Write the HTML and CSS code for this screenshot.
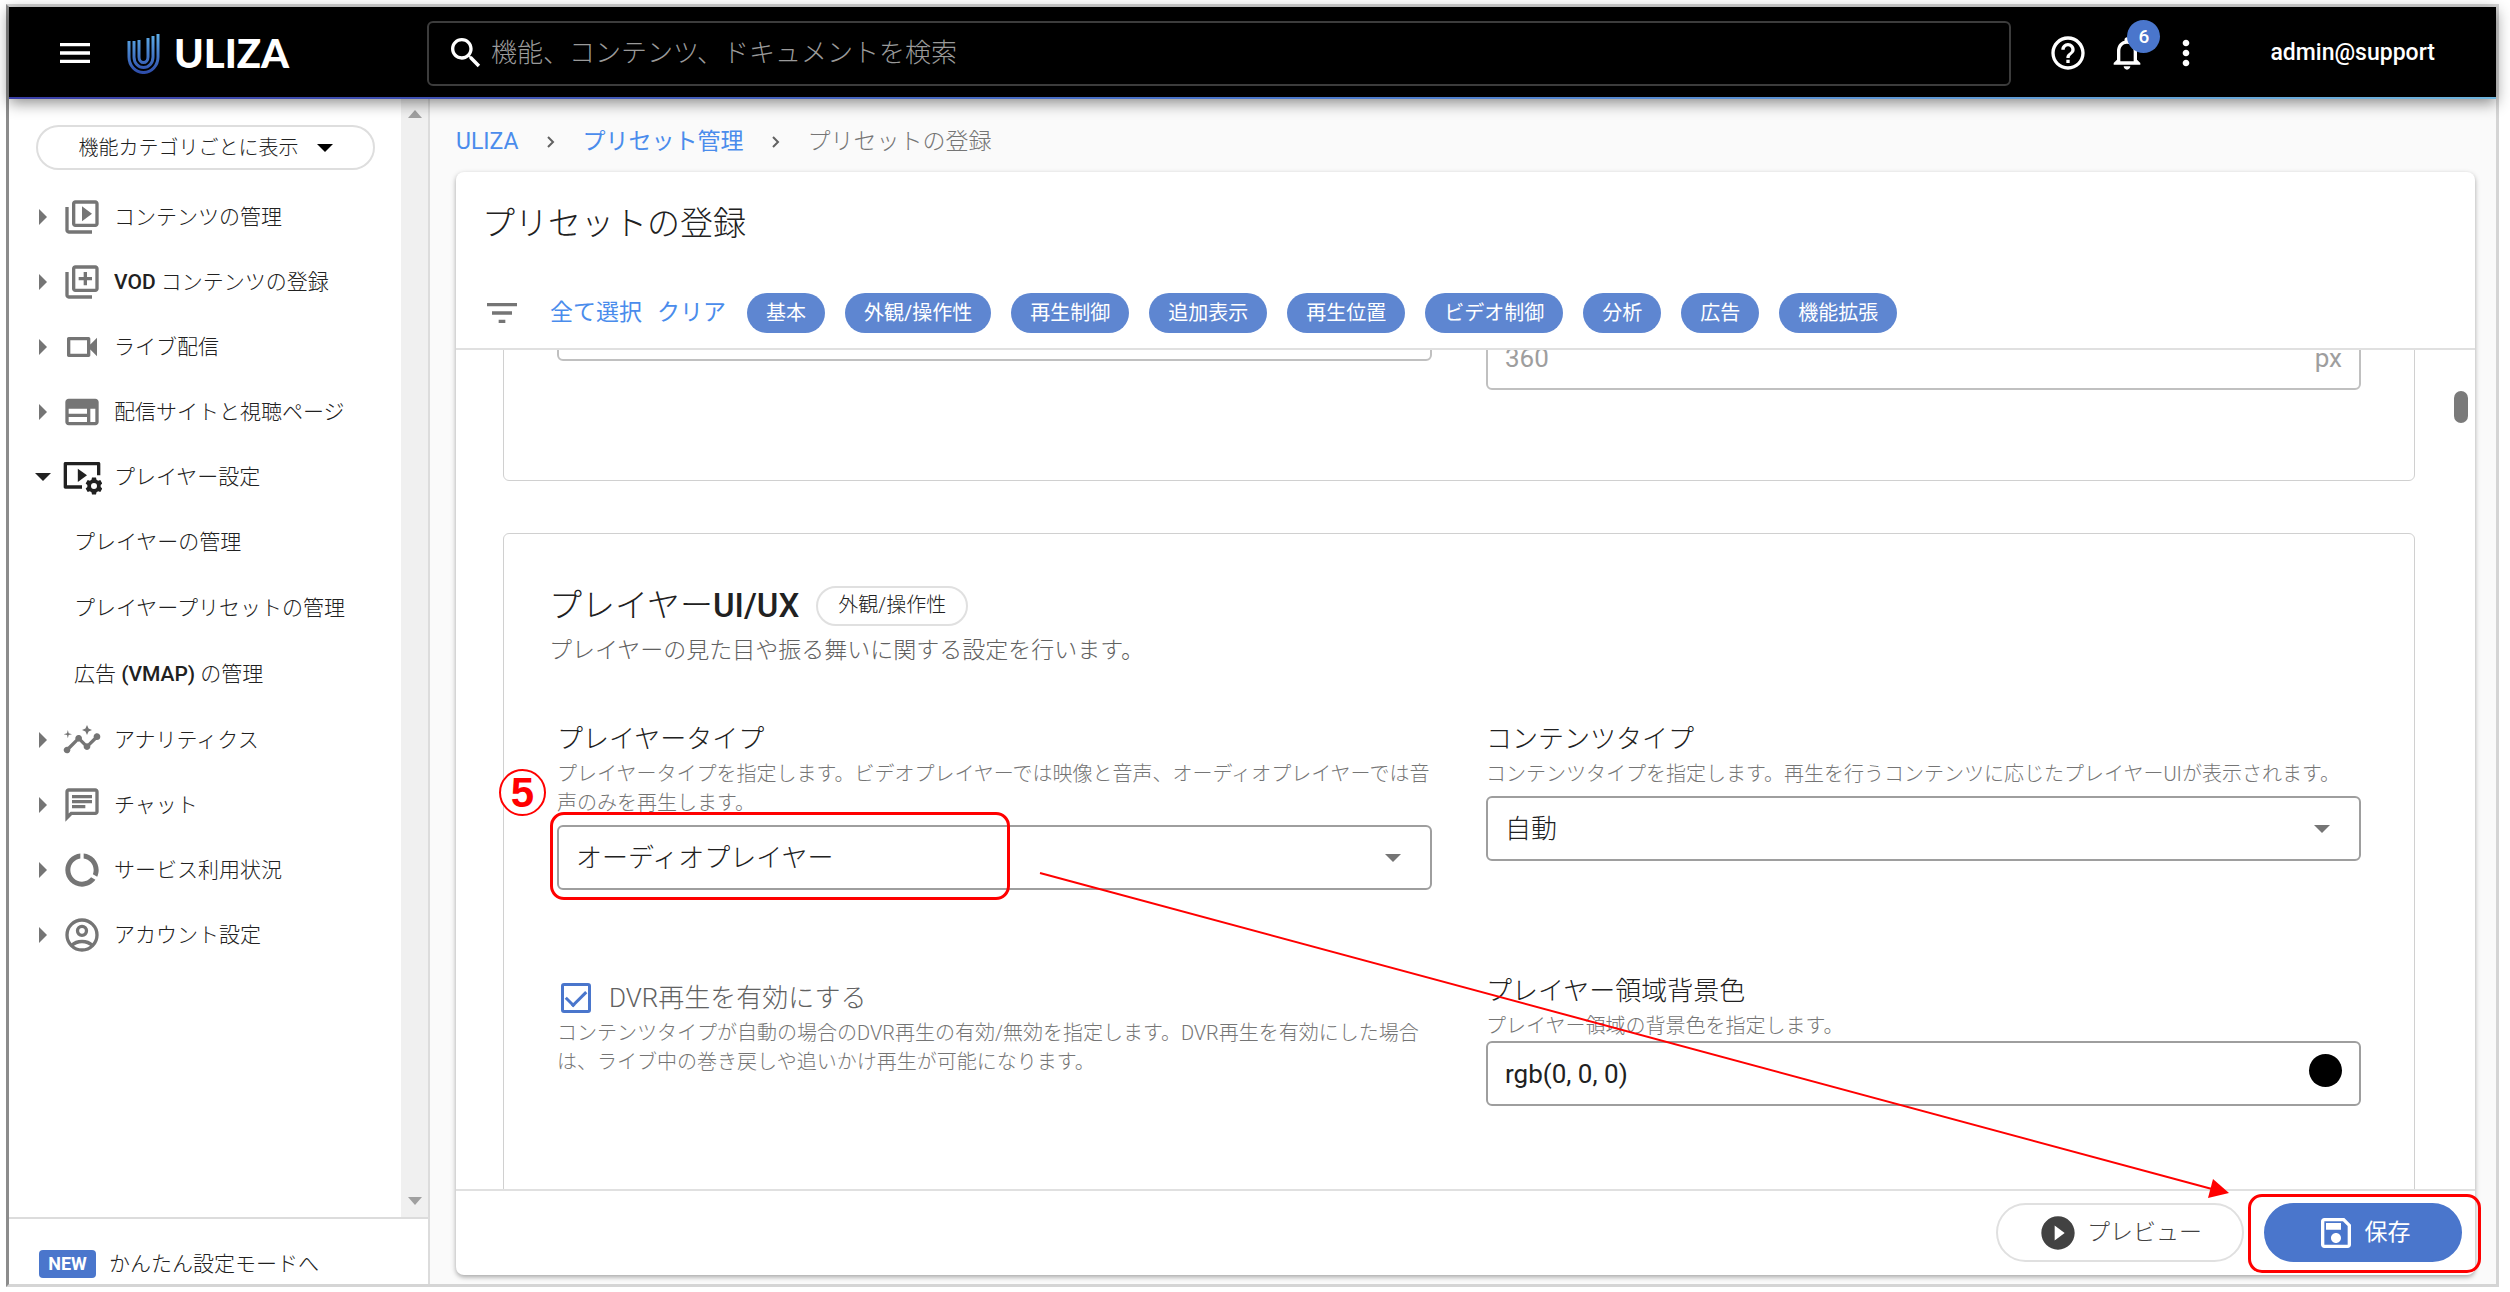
FILE: index.html
```html
<!DOCTYPE html>
<html lang="ja">
<head>
    <meta charset="UTF-8">
    <meta name="viewport" content="width=device-width, initial-scale=1.0">
    <title>プリセットの登録 - ULIZA</title>
    <link rel="stylesheet" href="styles.css">
</head>
<body>

<div class="window">
    <header class="topbar">
        <div class="brand">
            <button class="icon-btn" aria-label="メニュー">
                <svg class="icon" viewBox="0 0 24 24"><path d="M3 18h18v-2H3v2zm0-5h18v-2H3v2zm0-7v2h18V6H3z"/></svg>
            </button>
            <a class="logo" href="#">
                <svg class="logo-mark" viewBox="0 0 33 41">
                    <defs>
                        <linearGradient id="mark" x1="0" y1="0" x2="0" y2="41" gradientUnits="userSpaceOnUse">
                            <stop offset="0" stop-color="#5fb0ea"/>
                            <stop offset="1" stop-color="#2c4aa8"/>
                        </linearGradient>
                    </defs>
                    <g fill="none" stroke="url(#mark)" stroke-width="3">
                        <path d="M2 8v16a14 15 0 0 0 29 0V1"/>
                        <path d="M7 8v16a9 10 0 0 0 19 0V3"/>
                        <path d="M12 7v17a4 5 0 0 0 9 0V5"/>
                    </g>
                </svg>
                <span class="logo-text">ULIZA</span>
            </a>
        </div>
        <label class="search">
            <svg class="icon" viewBox="0 0 24 24"><path d="M15.5 14h-.79l-.28-.27C15.41 12.59 16 11.11 16 9.5 16 5.91 13.09 3 9.5 3S3 5.91 3 9.5 5.91 16 9.5 16c1.61 0 3.09-.59 4.23-1.57l.27.28v.79l5 4.99L20.49 19l-4.99-5zm-6 0C7.01 14 5 11.99 5 9.5S7.01 5 9.5 5 14 7.01 14 9.5 11.99 14 9.5 14z"/></svg>
            <input type="search" placeholder="機能、コンテンツ、ドキュメントを検索" aria-label="検索">
        </label>
        <div class="top-actions">
            <button class="icon-btn" aria-label="ヘルプ">
                <svg class="icon" viewBox="0 0 24 24"><path d="M11 18h2v-2h-2v2zm1-16C6.48 2 2 6.48 2 12s4.48 10 10 10 10-4.48 10-10S17.52 2 12 2zm0 18c-4.41 0-8-3.59-8-8s3.59-8 8-8 8 3.59 8 8-3.59 8-8 8zm0-14c-2.21 0-4 1.79-4 4h2c0-1.1.9-2 2-2s2 .9 2 2c0 2-3 1.75-3 5h2c0-2.25 3-2.5 3-5 0-2.21-1.79-4-4-4z"/></svg>
            </button>
            <button class="icon-btn" aria-label="お知らせ">
                <svg class="icon" viewBox="0 0 24 24"><path d="M12 22c1.1 0 2-.9 2-2h-4c0 1.1.9 2 2 2zm6-6v-5c0-3.07-1.63-5.64-4.5-6.32V4c0-.83-.67-1.5-1.5-1.5s-1.5.67-1.5 1.5v.68C7.64 5.36 6 7.92 6 11v5l-2 2v1h16v-1l-2-2zm-2 1H8v-6c0-2.48 1.51-4.5 4-4.5s4 2.02 4 4.5v6z"/></svg>
                <span class="badge">6</span>
            </button>
            <button class="icon-btn" aria-label="その他">
                <svg class="icon" viewBox="0 0 24 24"><path d="M12 8c1.1 0 2-.9 2-2s-.9-2-2-2-2 .9-2 2 .9 2 2 2zm0 2c-1.1 0-2 .9-2 2s.9 2 2 2 2-.9 2-2-.9-2-2-2zm0 6c-1.1 0-2 .9-2 2s.9 2 2 2 2-.9 2-2-.9-2-2-2z"/></svg>
            </button>
            <span class="user">admin@support</span>
        </div>
    </header>

    <div class="layout">
        <aside class="sidebar">
            <div class="side-scroll">
                <nav class="side-nav">
                    <button class="view-switch">機能カテゴリごとに表示
                        <svg class="down" viewBox="0 0 16 8"><path d="M0 0h16l-8 8z"/></svg>
                    </button>
                    <ul class="menu">
                        <li><a href="#"><svg class="caret" viewBox="0 0 16 16"><path d="M4 0l8 8-8 8z"/></svg>
                            <svg class="icon" viewBox="0 0 24 24"><path d="M4 6H2v14c0 1.1.9 2 2 2h14v-2H4V6zm16-4H8c-1.1 0-2 .9-2 2v12c0 1.1.9 2 2 2h12c1.1 0 2-.9 2-2V4c0-1.1-.9-2-2-2zm0 14H8V4h12v12zM12 5.500v9l6-4.500z"/></svg>コンテンツの管理</a></li>
                        <li><a href="#"><svg class="caret" viewBox="0 0 16 16"><path d="M4 0l8 8-8 8z"/></svg>
                            <svg class="icon" viewBox="0 0 24 24"><path d="M4 6H2v14c0 1.1.9 2 2 2h14v-2H4V6zm16-4H8c-1.1 0-2 .9-2 2v12c0 1.1.9 2 2 2h12c1.1 0 2-.9 2-2V4c0-1.1-.9-2-2-2zm0 14H8V4h12v12zM13 14h2v-3h3V9h-3V6h-2v3h-3v2h3z"/></svg><span><b>VOD</b> コンテンツの登録</span></a></li>
                        <li><a href="#"><svg class="caret" viewBox="0 0 16 16"><path d="M4 0l8 8-8 8z"/></svg>
                            <svg class="icon" viewBox="0 0 24 24"><path d="M15 8v8H5V8h10m1-2H4c-.55 0-1 .45-1 1v10c0 .55.45 1 1 1h12c.55 0 1-.45 1-1v-3.500l4 4v-11l-4 4V7c0-.55-.45-1-1-1z"/></svg>ライブ配信</a></li>
                        <li><a href="#"><svg class="caret" viewBox="0 0 16 16"><path d="M4 0l8 8-8 8z"/></svg>
                            <svg class="icon" viewBox="0 0 24 24"><path d="M20 4H4c-1.1 0-2 .9-2 2v12c0 1.1.9 2 2 2h16c1.1 0 2-.9 2-2V6c0-1.1-.9-2-2-2zm-5 14H4v-3h11v3zm0-5H4V10h11v3zm5 5h-3V10h3v8z"/></svg>配信サイトと視聴ページ</a></li>
                        <li class="open"><a href="#"><svg class="caret" viewBox="0 0 16 16"><path d="M0 4h16l-8 8z"/></svg>
                            <svg class="icon" viewBox="0 0 24 24"><path d="M2 3h20c.6 0 1 .4 1 1v7h-2V5H3v12h9v2H2c-.6 0-1-.4-1-1V4c0-.6.400-1 1-1z"/><path d="M9.500 7v8l5.500-4z"/><path fill-rule="evenodd" d="M18 12.300h2.400l.3 1.300 1 .6 1.300-.4 1.200 2.100-1 .9v1.200l1 .9-1.200 2.100-1.300-.4-1 .6-.3 1.300H18l-.3-1.300-1-.6-1.300.4-1.200-2.100 1-.9v-1.200l-1-.9 1.200-2.100 1.300.4 1-.6zM19.200 15.600a1.800 1.800 0 1 0 0 3.600 1.800 1.800 0 0 0 0-3.600z"/></svg>プレイヤー設定</a>
                            <ul class="submenu">
                                <li><a href="#">プレイヤーの管理</a></li>
                                <li><a href="#">プレイヤープリセットの管理</a></li>
                                <li><a href="#"><span>広告 <b>(VMAP)</b> の管理</span></a></li>
                            </ul>
                        </li>
                        <li><a href="#"><svg class="caret" viewBox="0 0 16 16"><path d="M4 0l8 8-8 8z"/></svg>
                            <svg class="icon" viewBox="0 0 24 24"><path d="M21 8c-1.450 0-2.260 1.440-1.930 2.510l-3.550 3.560c-.3-.09-.74-.09-1.040 0l-2.550-2.550C12.270 10.450 11.460 9 10 9c-1.450 0-2.270 1.440-1.930 2.520l-4.560 4.550C2.440 15.740 1 16.550 1 18c0 1.100.9 2 2 2 1.450 0 2.260-1.440 1.930-2.510l4.550-4.560c.3.09.74.09 1.040 0l2.550 2.550C12.730 16.550 13.540 18 15 18c1.450 0 2.270-1.440 1.930-2.520l3.560-3.550C21.560 12.260 23 11.450 23 10c0-1.100-.9-2-2-2zM15 9l.94-2.070L18 6l-2.060-.93L15 3l-.92 2.070L12 6l2.080.93zM3.500 11L4 9l2-.5L4 8l-.5-2L3 8l-2 .5L3 9z"/></svg>アナリティクス</a></li>
                        <li><a href="#"><svg class="caret" viewBox="0 0 16 16"><path d="M4 0l8 8-8 8z"/></svg>
                            <svg class="icon" viewBox="0 0 24 24"><path d="M4 4h16v12H5.170L4 17.170V4m0-2c-1.100 0-1.990.9-1.990 2L2 22l4-4h14c1.100 0 2-.9 2-2V4c0-1.100-.9-2-2-2H4zm2 10h8v2H6v-2zm0-3h12v2H6V9zm0-3h12v2H6V6z"/></svg>チャット</a></li>
                        <li><a href="#"><svg class="caret" viewBox="0 0 16 16"><path d="M4 0l8 8-8 8z"/></svg>
                            <svg class="icon" viewBox="0 0 24 24"><path d="M13 2.050v3.030c3.390.49 6 3.390 6 6.920 0 .9-.18 1.750-.48 2.540l2.600 1.530c.56-1.240.88-2.620.88-4.070 0-5.180-3.950-9.450-9-9.950zM12 19c-3.870 0-7-3.130-7-7 0-3.530 2.610-6.430 6-6.920V2.050c-5.060.5-9 4.760-9 9.950 0 5.520 4.470 10 9.990 10 3.310 0 6.240-1.610 8.060-4.090l-2.600-1.530C16.170 17.980 14.210 19 12 19z"/></svg>サービス利用状況</a></li>
                        <li><a href="#"><svg class="caret" viewBox="0 0 16 16"><path d="M4 0l8 8-8 8z"/></svg>
                            <svg class="icon line" viewBox="0 0 24 24"><circle cx="12" cy="12" r="9"/><circle cx="12" cy="9.500" r="2.700"/><path d="M5.800 18.300c1.500-1.500 3.700-2.400 6.200-2.400s4.700.9 6.200 2.400"/></svg>アカウント設定</a></li>
                    </ul>
                </nav>
                <div class="side-bar-track">
                    <svg viewBox="0 0 14 8"><path d="M0 8h14L7 0z"/></svg>
                    <svg viewBox="0 0 14 8"><path d="M0 0h14L7 8z"/></svg>
                </div>
            </div>
            <a class="easy-mode" href="#"><span class="new">NEW</span>かんたん設定モードへ</a>
        </aside>

        <main class="main">
            <nav class="crumbs">
                <a href="#">ULIZA</a>
                <svg viewBox="0 0 8 12"><path d="M1 1l5 5-5 5"/></svg>
                <a href="#">プリセット管理</a>
                <svg viewBox="0 0 8 12"><path d="M1 1l5 5-5 5"/></svg>
                <span>プリセットの登録</span>
            </nav>

            <div class="card">
                <div class="card-head">
                    <h1>プリセットの登録</h1>
                    <div class="filters">
                        <svg class="icon" viewBox="0 0 24 24"><path d="M10 18h4v-2h-4v2zM3 6v2h18V6H3zm3 7h12v-2H6v2z"/></svg>
                        <div class="filter-links">
                            <a href="#">全て選択</a>
                            <a href="#">クリア</a>
                        </div>
                        <div class="chips">
                            <button class="chip">基本</button>
                            <button class="chip">外観/操作性</button>
                            <button class="chip">再生制御</button>
                            <button class="chip">追加表示</button>
                            <button class="chip">再生位置</button>
                            <button class="chip">ビデオ制御</button>
                            <button class="chip">分析</button>
                            <button class="chip">広告</button>
                            <button class="chip">機能拡張</button>
                        </div>
                    </div>
                </div>

                <div class="card-scroll">
                    <section class="panel panel-size">
                        <div class="grid">
                            <div class="box muted"><input type="text" aria-label="幅"></div>
                            <div class="box muted lower"><input type="text" placeholder="360" aria-label="高さ"><span>px</span></div>
                        </div>
                    </section>

                    <section class="panel">
                        <div class="panel-title">
                            <h2>プレイヤー<b>UI/UX</b></h2>
                            <span class="tag">外観/操作性</span>
                        </div>
                        <p class="panel-text">プレイヤーの見た目や振る舞いに関する設定を行います。</p>
                        <div class="grid">
                            <div class="field">
                                <label for="player-type">プレイヤータイプ</label>
                                <p class="help">プレイヤータイプを指定します。ビデオプレイヤーでは映像と音声、オーディオプレイヤーでは音<br>声のみを再生します。</p>
                                <div class="box marked">
                                    <select id="player-type">
                                        <option>オーディオプレイヤー</option>
                                        <option>ビデオプレイヤー</option>
                                    </select>
                                    <svg class="down" viewBox="0 0 16 8"><path d="M0 0h16l-8 8z"/></svg>
                                </div>
                                <span class="step">5</span>
                            </div>
                            <div class="field">
                                <label for="content-type">コンテンツタイプ</label>
                                <p class="help">コンテンツタイプを指定します。再生を行うコンテンツに応じたプレイヤーUIが表示されます。</p>
                                <div class="box">
                                    <select id="content-type">
                                        <option>自動</option>
                                    </select>
                                    <svg class="down" viewBox="0 0 16 8"><path d="M0 0h16l-8 8z"/></svg>
                                </div>
                            </div>
                            <div class="field field-check">
                                <label class="check"><input type="checkbox" checked>DVR再生を有効にする</label>
                                <p class="help">コンテンツタイプが自動の場合のDVR再生の有効/無効を指定します。DVR再生を有効にした場合<br>は、ライブ中の巻き戻しや追いかけ再生が可能になります。</p>
                            </div>
                            <div class="field field-color">
                                <label for="bg-color">プレイヤー領域背景色</label>
                                <p class="help">プレイヤー領域の背景色を指定します。</p>
                                <div class="box">
                                    <input id="bg-color" type="text" value="rgb(0, 0, 0)">
                                    <button class="swatch" aria-label="色を選択"></button>
                                </div>
                            </div>
                        </div>
                    </section>
                    <div class="thumb"></div>
                </div>

                <div class="card-foot">
                    <button class="btn">
                        <svg class="icon" viewBox="0 0 24 24"><path d="M12 2C6.480 2 2 6.480 2 12s4.480 10 10 10 10-4.480 10-10S17.520 2 12 2zm-2 14.500v-9l6 4.500z"/></svg>プレビュー
                    </button>
                    <button class="btn btn-save">
                        <svg class="icon" viewBox="0 0 24 24"><path d="M17 3H5c-1.110 0-2 .9-2 2v14c0 1.100.890 2 2 2h14c1.100 0 2-.9 2-2V7l-4-4zm2 16H5V5h11.170L19 7.830V19zm-7-7c-1.660 0-3 1.340-3 3s1.340 3 3 3 3-1.340 3-3-1.340-3-3-3zM6 6h9v4H6z"/></svg>保存
                    </button>
                </div>
            </div>
        </main>
    </div>
</div>

<!-- arrow from the player type to the save button -->
<svg class="arrow">
    <path class="arrow-line" d="M1040 873L2212 1189"/>
    <path class="arrow-head" d="M2229 1193l-16-14-5 19z"/>
</svg>

</body>
</html>
```
FILE: styles.css
```css
* {
    box-sizing: border-box;
    margin: 0;
    padding: 0;
}

body {
    height: 100vh;
    padding: 4px 11px 5px 6px;
    background: #fff;
    color: #212121;
    font: 300 21px/30px Roboto, "Noto Sans CJK JP", sans-serif;
    overflow: hidden;
}

a {
    color: inherit;
    text-decoration: none;
}

b {
    font-weight: 500;
}

ul {
    list-style: none;
}

button,
input,
select {
    font: inherit;
    color: inherit;
    background: none;
    border: 0;
    outline: 0;
}

.icon {
    width: 40px;
    height: 40px;
    flex: none;
    fill: currentColor;
}

.icon.line {
    fill: none;
    stroke: currentColor;
    stroke-width: 2;
}

.window {
    height: 100%;
    display: flex;
    flex-direction: column;
    border: 3px solid #d5d5d5;
    border-left-color: #8c8c8c;
}

/* Top bar */
.topbar {
    height: 92px;
    flex: none;
    display: flex;
    align-items: center;
    padding-right: 61px;
    background: linear-gradient(90deg, #3a3fa8, #4a76cc 50%, #6fb4dc) bottom / 100% 2px no-repeat, #000;
    color: #fff;
    box-shadow: 0 4px 14px rgba(0, 0, 0, 0.45);
    position: relative;
    z-index: 2;
}

.brand {
    width: 418px;
    padding-left: 46px;
    display: flex;
    align-items: center;
    gap: 32px;
}

.logo {
    display: flex;
    align-items: center;
    gap: 14px;
}

.logo-mark {
    width: 33px;
    height: 41px;
}

.logo-text {
    font: 900 40px/40px Lato, sans-serif;
}

.icon-btn {
    display: flex;
    position: relative;
    cursor: pointer;
}

.search {
    flex: 1;
    height: 65px;
    display: flex;
    align-items: center;
    gap: 5px;
    padding-left: 17px;
    border: 2px solid #3c3c3c;
    border-radius: 6px;
}

.search input {
    flex: 1;
    font-size: 26px;
}

.search input::placeholder {
    color: #9a9a9a;
}

.top-actions {
    display: flex;
    align-items: center;
    gap: 19px;
    padding-left: 37px;
}

.badge {
    position: absolute;
    left: 20px;
    top: -13px;
    width: 33px;
    height: 33px;
    border-radius: 50%;
    background: #4a76cc;
    font-size: 19px;
    line-height: 33px;
    font-weight: 500;
    text-align: center;
}

.user {
    margin-left: 45px;
    font-size: 23px;
    font-weight: 500;
}

.layout {
    flex: 1;
    min-height: 0;
    display: flex;
}

/* Sidebar */
.sidebar {
    width: 421px;
    flex: none;
    display: flex;
    flex-direction: column;
    border-right: 2px solid #dcdcdc;
}

.side-scroll {
    flex: 1;
    min-height: 0;
    display: flex;
}

.side-nav {
    flex: 1;
    padding-top: 26px;
}

.view-switch {
    display: flex;
    align-items: center;
    justify-content: center;
    gap: 18px;
    width: 339px;
    height: 45px;
    margin-left: 27px;
    border: 2px solid #dedede;
    border-radius: 23px;
    font-size: 20px;
}

.down {
    width: 16px;
    height: 8px;
    flex: none;
}

.menu {
    margin-top: 14px;
}

.menu a {
    height: 65px;
    display: flex;
    align-items: center;
    padding-left: 26px;
}

.menu .icon {
    margin: 0 12px 0 11px;
    color: #757575;
}

.caret {
    width: 16px;
    height: 16px;
    fill: #757575;
}

.open > a .icon {
    color: #212121;
}

.open > a .caret {
    fill: #212121;
}

.submenu a {
    height: 66px;
    padding-left: 65px;
}

.side-bar-track {
    width: 27px;
    padding: 11px 0 12px;
    display: flex;
    flex-direction: column;
    align-items: center;
    justify-content: space-between;
    background: #f0f0f0;
}

.side-bar-track svg {
    width: 14px;
    height: 8px;
    fill: #a0a0a0;
}

.easy-mode {
    height: 67px;
    flex: none;
    display: flex;
    align-items: center;
    gap: 13px;
    padding: 24px 0 0 30px;
    border-top: 2px solid #dcdcdc;
}

.new {
    width: 57px;
    background: #4a76cc;
    border-radius: 4px;
    color: #fff;
    font-size: 18px;
    font-weight: 700;
    line-height: 28px;
    text-align: center;
}

/* Main */
.main {
    flex: 1;
    min-width: 0;
    display: flex;
    flex-direction: column;
    padding: 25px 21px 9px 26px;
    background: #fafafa;
}

.crumbs {
    display: flex;
    align-items: center;
    height: 36px;
    margin-bottom: 12px;
    font-size: 23px;
    color: #757575;
}

.crumbs svg {
    width: 8px;
    height: 12px;
    margin: 0 28px;
    fill: none;
    stroke: #616161;
    stroke-width: 2;
}

.crumbs a,
.filters a {
    color: #4a8cec;
    font-weight: 400;
}

.card {
    flex: 1;
    min-height: 0;
    display: flex;
    flex-direction: column;
    background: #fff;
    border-radius: 8px;
    box-shadow: 0 2px 5px rgba(0, 0, 0, 0.35);
}

.card-head {
    padding: 29px 26px 15px;
    border-bottom: 2px solid #e0e0e0;
}

h1 {
    font-size: 33px;
    line-height: 46px;
    font-weight: 300;
}

.filters {
    display: flex;
    align-items: center;
    margin-top: 46px;
}

.filters .icon {
    color: #757575;
}

.filter-links {
    display: flex;
    gap: 15px;
    margin: 0 21px 0 28px;
    font-size: 23px;
}

.chips {
    display: flex;
    gap: 20px;
}

.chip {
    height: 40px;
    padding: 0 19px;
    border-radius: 20px;
    background: #5e86d1;
    color: #fff;
    font-size: 20px;
    font-weight: 400;
}

.card-scroll {
    flex: 1;
    min-height: 0;
    overflow: hidden;
    padding: 0 60px 0 47px;
    position: relative;
}

.thumb {
    position: absolute;
    right: 7px;
    top: 41px;
    width: 14px;
    height: 32px;
    border-radius: 7px;
    background: #7a7a7a;
}

.panel {
    min-height: 700px;
    padding: 52px 53px 0 45px;
    border: 1px solid #d0d0d0;
    border-radius: 6px;
}

/* already scrolled past the top of this one */
.panel-size {
    min-height: 0;
    height: 191px;
    margin: -60px 0 52px;
    padding-top: 5px;
}

.panel-title {
    display: flex;
    align-items: center;
    gap: 17px;
    height: 40px;
}

h2 {
    font-size: 33px;
    font-weight: 300;
}

.tag {
    height: 40px;
    padding: 0 20px;
    border: 2px solid #e0e0e0;
    border-radius: 20px;
    font-size: 20px;
    line-height: 34px;
}

.panel-text {
    margin: 10px 0 55px;
    color: #616161;
    font-size: 23px;
}

.grid {
    display: grid;
    grid-template-columns: 1fr 1fr;
    gap: 83px 54px;
    margin-left: 8px;
}

.field {
    position: relative;
}

.field label {
    display: block;
    font-size: 26px;
    line-height: 36px;
}

.help {
    margin: 3px 0 7px;
    color: #757575;
    font-size: 20px;
    line-height: 29px;
    white-space: nowrap;
}

.box {
    display: flex;
    align-items: center;
    height: 65px;
    padding: 0 17px;
    border: 2px solid #9e9e9e;
    border-radius: 6px;
    font-size: 26px;
    position: relative;
}

.box input,
.box select {
    flex: 1;
    min-width: 0;
    height: 100%;
    appearance: none;
}

.box input {
    font-weight: 400;
}

.box .down {
    position: absolute;
    right: 29px;
    fill: #757575;
    pointer-events: none;
}

.muted {
    border-color: #c0c0c0;
    color: #9e9e9e;
    font-weight: 400;
}

.muted input::placeholder {
    color: #9e9e9e;
}

.lower {
    margin-top: 29px;
}

.field-check {
    padding-top: 7px;
}

.field .check {
    display: flex;
    align-items: center;
    gap: 18px;
    padding-left: 4px;
    color: #616161;
}

.check input {
    width: 30px;
    height: 30px;
    appearance: none;
    border: 3px solid #4a76cc;
    border-radius: 3px;
    display: grid;
    place-items: center;
}

.check input:checked::before {
    content: "";
    width: 17px;
    height: 9px;
    margin-top: -5px;
    border: solid #4a76cc;
    border-width: 0 0 3px 3px;
    transform: rotate(-45deg);
}

.field-color .help {
    margin-bottom: 0;
}

.swatch {
    width: 33px;
    height: 33px;
    margin-bottom: 6px;
    border-radius: 50%;
    background: #000;
}

.card-foot {
    display: flex;
    justify-content: flex-end;
    gap: 20px;
    padding: 12px 13px 13px;
    border-top: 2px solid #e0e0e0;
}

.btn {
    display: flex;
    align-items: center;
    justify-content: center;
    gap: 9px;
    width: 248px;
    height: 59px;
    border: 2px solid #e0e0e0;
    border-radius: 30px;
    font-size: 23px;
    color: #424242;
    position: relative;
}

.btn-save {
    width: 198px;
    background: #4a76cc;
    border-color: #4a76cc;
    color: #fff;
    font-weight: 400;
}

/* Red guide marks */
.marked::after,
.btn-save::after {
    content: "";
    position: absolute;
    border: 3px solid #f00;
    border-radius: 14px;
    pointer-events: none;
}

.marked::after {
    left: -9px;
    top: -15px;
    width: 460px;
    height: 88px;
    box-sizing: border-box;
}

.btn-save::after {
    inset: -11px -21px -13px -18px;
    box-sizing: border-box;
}

.step {
    position: absolute;
    left: -58px;
    top: 48px;
    width: 47px;
    height: 47px;
    border: 2px solid #f00;
    border-radius: 50%;
    background: #fff;
    color: #f00;
    font: 700 42px/44px "Liberation Sans", sans-serif;
    text-align: center;
}

.arrow {
    position: absolute;
    left: 0;
    top: 0;
    width: 100%;
    height: 100%;
    z-index: 3;
    pointer-events: none;
}

.arrow-line {
    stroke: #f00;
    stroke-width: 2;
}

.arrow-head {
    fill: #f00;
}
```
